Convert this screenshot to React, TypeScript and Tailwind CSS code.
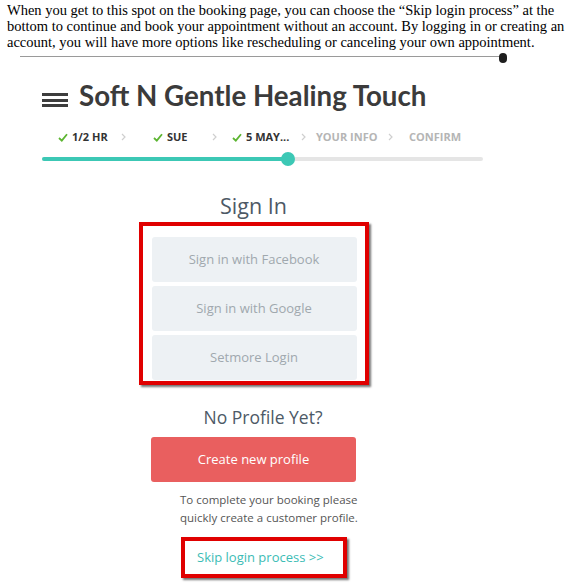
import React from "react";

function Check() {
  return (
    <svg width="10" height="9" viewBox="0 0 10 9" className="mr-[4px] shrink-0">
      <path d="M1 5 L3.8 7.6 L9 1.2" fill="none" stroke="#5cb531" strokeWidth="1.8" />
    </svg>
  );
}

function Chevron({ w }: { w: string }) {
  return (
    <span className={`flex shrink-0 ${w}`}>
      <svg width="5" height="8" viewBox="0 0 5 8">
        <path d="M1 1 L4 4 L1 7" fill="none" stroke="#cfcfcf" strokeWidth="1.2" />
      </svg>
    </span>
  );
}

export default function App() {
  return (
    <div className="h-[585px] w-[567px] overflow-hidden bg-white">
      {/* Intro paragraph */}
      <p className="pl-[7px] pt-[2px] text-[14.5px] leading-[16px] text-black [font-family:'Liberation_Serif',serif]">
        When you get to this spot on the booking page, you can choose the “Skip login process” at the
        <br />
        bottom to continue and book your appointment without an account. By logging in or creating an
        <br />
        account, you will have more options like rescheduling or canceling your own appointment.
      </p>

      {/* divider */}
      <div className="relative ml-[20px] mt-[6px] h-px w-[482px] bg-[#9a9a9a]">
        <div className="absolute left-[479px] top-[-3px] h-[10px] w-[8px] rounded-full bg-[#1e1e1e]" />
      </div>

      {/* Widget */}
      <div className="pl-[42px] [font-family:'Open_Sans',sans-serif]">
        {/* Header */}
        <div className="mt-[23px] flex items-start">
          <div className="mt-[13px] flex w-[26px] flex-col gap-[2.5px]">
            <div className="h-[3px] bg-[#3d3d3d]" />
            <div className="h-[3px] bg-[#3d3d3d]" />
            <div className="h-[3px] bg-[#3d3d3d]" />
          </div>
          <h1 className="ml-[11px] text-[27.7px] font-bold leading-[32px] text-[#3b3b3b] [font-family:Lato,sans-serif]">
            Soft N Gentle Healing Touch
          </h1>
        </div>

        {/* Steps */}
        <div className="mt-[18px] flex h-[14px] items-center pl-[16px] text-[11px] font-bold leading-[14px]">
          <span className="flex w-[63px] shrink-0 items-center text-[#333]">
            <Check />
            1/2 HR
          </span>
          <Chevron w="w-[32px]" />
          <span className="flex w-[59px] shrink-0 items-center text-[#333]">
            <Check />
            SUE
          </span>
          <Chevron w="w-[20px]" />
          <span className="flex w-[69px] shrink-0 items-center text-[#333]">
            <Check />
            5 MAY...
          </span>
          <Chevron w="w-[15px]" />
          <span className="w-[72px] shrink-0 text-[#b5b5b5]">YOUR INFO</span>
          <Chevron w="w-[21px]" />
          <span className="text-[#b5b5b5]">CONFIRM</span>
        </div>

        {/* Progress */}
        <div className="relative mt-[13px] h-[4px] w-[441px] rounded-full bg-[#e5e5e5]">
          <div className="h-[4px] w-[246px] rounded-full bg-[#3cc8b5]" />
          <div className="absolute left-[239px] top-[-5px] h-[14px] w-[14px] rounded-full bg-[#3cc8b5]" />
        </div>
      </div>

      {/* Sign in */}
      <div className="flex w-[507px] flex-col items-center [font-family:'Open_Sans',sans-serif]">
        <h2 className="mt-[33px] text-[21.5px] leading-[24px] text-[#4d5966]">Sign In</h2>
        <div className="mt-[4px] border-[4px] border-[#e00000] bg-white pb-[1px] pl-[9px] pr-[8px] pt-[11px] shadow-[2px_2px_2px_rgba(0,0,0,0.55)]">
          <div className="flex w-[205px] flex-col gap-[4px]">
            {["Sign in with Facebook", "Sign in with Google", "Setmore Login"].map((t) => (
              <div
                key={t}
                className="flex h-[45px] items-center justify-center rounded-[3px] bg-[#edf1f4] text-[13px] text-[#a0a8ae]"
              >
                {t}
              </div>
            ))}
          </div>
        </div>

        <h2 className="ml-[19px] mt-[20px] text-[17.5px] leading-[24px] text-[#4d5966]">No Profile Yet?</h2>
        <div className="mt-[8px] flex h-[45px] w-[205px] items-center justify-center rounded-[3px] bg-[#e95f5f] text-[13px] text-white">
          Create new profile
        </div>
        <p className="ml-[180px] mt-[9px] self-start whitespace-nowrap text-[11.5px] leading-[18px] text-[#555]">
          To complete your booking please
          <br />
          quickly create a customer profile.
        </p>
        <div className="ml-[181px] mt-[10px] flex h-[41px] w-[166px] items-center self-start border-[4px] border-[#e00000] pl-[12px] text-[13px] text-[#3cbcb5] shadow-[2px_2px_2px_rgba(0,0,0,0.55)]">
          Skip login process &gt;&gt;
        </div>
      </div>
    </div>
  );
}
